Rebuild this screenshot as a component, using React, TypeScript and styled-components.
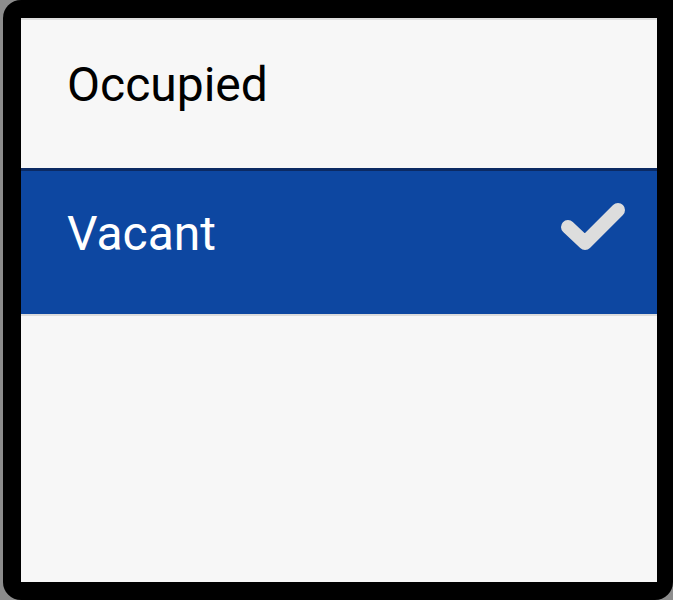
import styled, { createGlobalStyle } from "styled-components";

const GlobalStyle = createGlobalStyle`
  html, body {
    margin: 0;
    padding: 0;
    background: #8c8c8c;
    font-family: Roboto, "Liberation Sans", sans-serif;
  }
`;

const Frame = styled.div`
  box-sizing: border-box;
  width: 670px;
  height: 600px;
  margin-left: 3px;
  background: #000;
  border-radius: 18px 0 18px 18px;
  padding: 18px 16px 18px 18px;
`;

const Sheet = styled.div`
  height: 100%;
  background: #f7f7f7;
  border-top: 2px solid #dedede;
  box-sizing: border-box;
  display: flex;
  flex-direction: column;
`;

const Option = styled.div<{ $selected?: boolean }>`
  box-sizing: border-box;
  height: 148px;
  display: flex;
  align-items: center;
  justify-content: space-between;
  padding: 0 30px 18px 46px;
  font-size: 48px;
  color: ${(p) => (p.$selected ? "#fff" : "#000")};
  background: ${(p) => (p.$selected ? "#0d47a1" : "transparent")};
  border-top: ${(p) => (p.$selected ? "3px solid #0b2a63" : "none")};
  border-bottom: ${(p) => (p.$selected ? "2px solid #dcdcdc" : "none")};
`;

const Label = styled.span`
  line-height: 1;
`;

function Check() {
  return (
    <svg width="70" height="70" viewBox="0 0 70 70">
      <polyline
        points="11,28 28,44 61,11"
        fill="none"
        stroke="#dddddd"
        strokeWidth="14"
        strokeLinecap="round"
        strokeLinejoin="round"
      />
    </svg>
  );
}

export default function App() {
  return (
    <>
      <GlobalStyle />
      <Frame>
        <Sheet>
          <Option>
            <Label>Occupied</Label>
          </Option>
          <Option $selected>
            <Label>Vacant</Label>
            <Check />
          </Option>
        </Sheet>
      </Frame>
    </>
  );
}
